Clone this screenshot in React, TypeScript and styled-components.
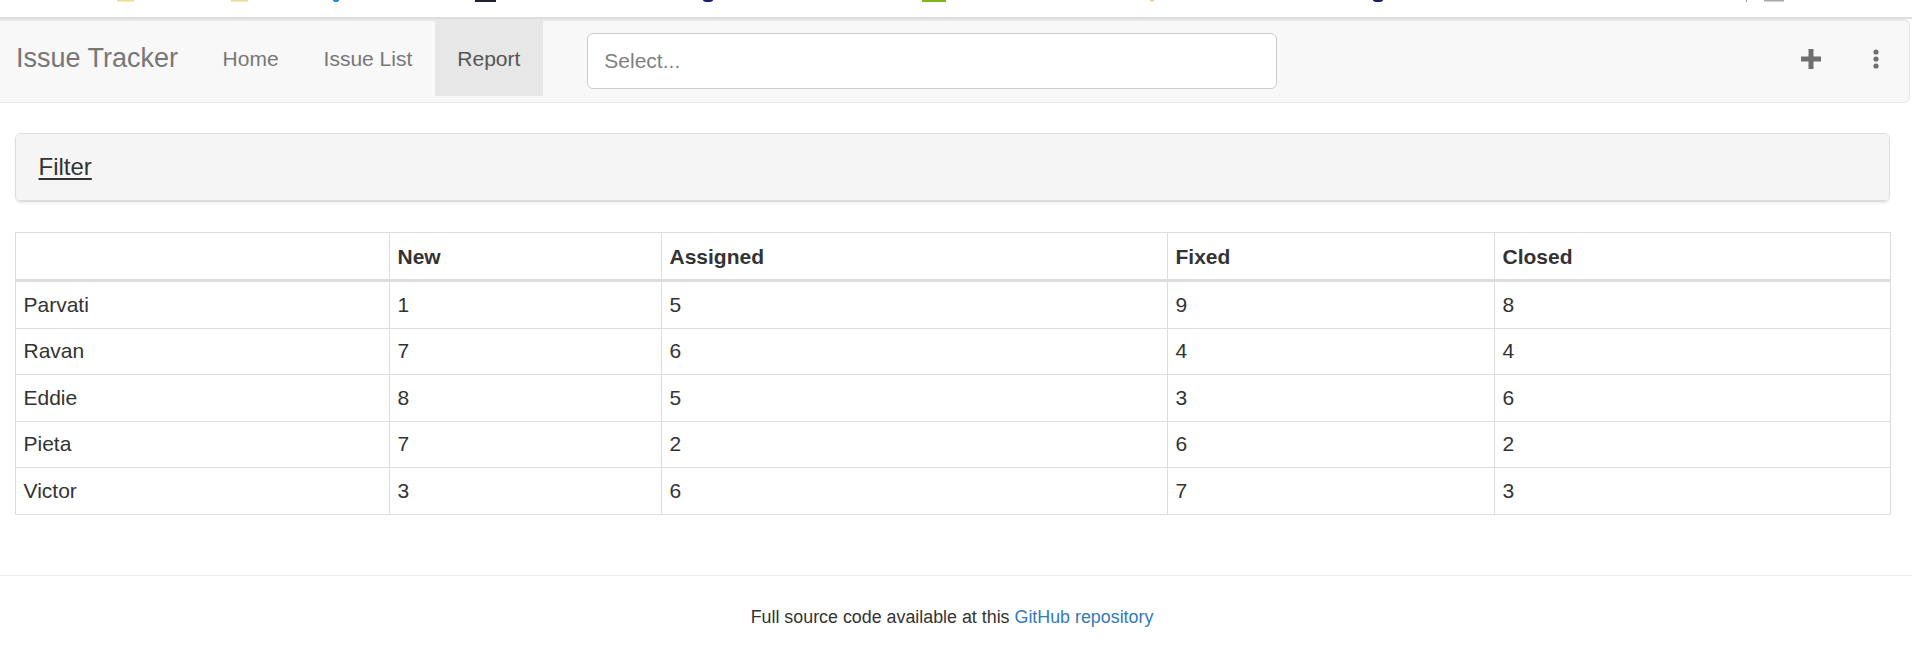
import React from "react";
import styled, { createGlobalStyle } from "styled-components";

const Global = createGlobalStyle`
  html, body { margin: 0; padding: 0; background: #fff; }
  body {
    font-family: "Liberation Sans", Arial, Helvetica, sans-serif;
    font-size: 21px;
    line-height: 30px;
    color: #333;
    width: 1912px;
    overflow: hidden;
  }
  * { box-sizing: border-box; }
`;

const Page = styled.div`
  display: flex;
  flex-direction: column;
  width: 1912px;
`;

const ChromeStrip = styled.div`
  height: 17px;
  background: #fff;
  border-bottom: 2px solid #dcdce1;
  box-sizing: content-box;
  display: flex;
  svg { display: block; }
`;

const Navbar = styled.nav`
  display: flex;
  align-items: flex-start;
  height: 84px;
  margin-right: 2px;
  background: #f8f8f8;
  border: 1px solid #e7e7e7;
  border-top-width: 2px;
  border-left: none;
  border-radius: 0 6px 6px 0;
`;

const Brand = styled.a`
  display: block;
  padding: 0 22px 0 16px;
  height: 75px;
  line-height: 75px;
  font-size: 27px;
  color: #777;
  text-decoration: none;
  white-space: nowrap;
`;

const NavItem = styled.a<{ $active?: boolean }>`
  display: block;
  padding: 0 22.5px;
  height: 75px;
  line-height: 75px;
  font-size: 21px;
  color: ${(p) => (p.$active ? "#555" : "#777")};
  background: ${(p) => (p.$active ? "#e7e7e7" : "transparent")};
  text-decoration: none;
  white-space: nowrap;
`;

const SelectBox = styled.div`
  margin: 12px 0 0 44.5px;
  width: 690px;
  height: 56px;
  border: 1px solid #ccc;
  border-radius: 6px;
  background: #fff;
  display: flex;
  align-items: center;
  padding-left: 16px;
  color: #808080;
  font-size: 21px;
`;

const RightNav = styled.div`
  margin-left: auto;
  display: flex;
  align-items: flex-start;
`;

const IconLink = styled.a<{ $w: number }>`
  width: ${(p) => p.$w}px;
  height: 75px;
  display: flex;
  align-items: center;
  justify-content: center;
  color: #777;
  svg { display: block; }
`;

const Content = styled.main`
  padding: 30px 22px 0 15px;
  display: flex;
  flex-direction: column;
`;

const Panel = styled.section`
  border: 1px solid #ddd;
  border-radius: 6px;
  background: #fff;
  box-shadow: 0 1.5px 1.5px rgba(0, 0, 0, 0.05);
  margin-bottom: 30px;
  overflow: hidden;
`;

const PanelHeading = styled.div`
  background: #f5f5f5;
  padding: 15px 22.5px;
  border-bottom: 1px solid #ddd;
  height: 67px;
`;

const PanelTitle = styled.a`
  font-size: 24px;
  line-height: 36px;
  color: #333;
  text-decoration: underline;
  text-underline-offset: 3px;
  text-decoration-thickness: 1.5px;
`;

const Table = styled.table`
  width: 1875px;
  border-collapse: collapse;
  border: 1px solid #ddd;
  table-layout: fixed;
  margin-bottom: 30px;
`;

const Th = styled.th`
  text-align: left;
  font-weight: bold;
  vertical-align: bottom;
  padding: 8.5px 6.5px 7.5px 7.5px;
  line-height: 30px;
  border: 1px solid #ddd;
  border-bottom: 3px solid #ddd;
  color: #333;
`;

const Td = styled.td`
  padding: 7.5px 6.5px 7.5px 7.5px;
  line-height: 30.6px;
  border: 1px solid #ddd;
  color: #333;
`;

const Footer = styled.footer`
  display: flex;
  flex-direction: column;
`;

const Rule = styled.hr`
  margin: 30px 0 0;
  border: 0;
  border-top: 1.5px solid #eee;
  height: 0;
`;

const FooterText = styled.p`
  margin: 29px 0 0;
  padding-right: 8px;
  text-align: center;
  font-size: 17.85px;
  line-height: 25px;
  color: #333;
  a { color: #337ab7; text-decoration: none; }
`;

const cols = [374, 272, 506, 327, 396];
const heads = ["", "New", "Assigned", "Fixed", "Closed"];
const rows: [string, number, number, number, number][] = [
  ["Parvati", 1, 5, 9, 8],
  ["Ravan", 7, 6, 4, 4],
  ["Eddie", 8, 5, 3, 6],
  ["Pieta", 7, 2, 6, 2],
  ["Victor", 3, 6, 7, 3],
];

function StripArt() {
  return (
    <svg width="1912" height="17" viewBox="0 0 1912 17">
      <rect x="117" y="0" width="17" height="1.5" fill="#f4da8c" />
      <rect x="231" y="0" width="17" height="1.5" fill="#f4da8c" />
      <ellipse cx="336" cy="0" rx="3" ry="2" fill="#1b8ad6" />
      <rect x="475" y="0" width="21" height="2" fill="#1e2233" />
      <ellipse cx="708" cy="0" rx="5" ry="2" fill="#1c1c78" />
      <rect x="922" y="0" width="24" height="2" fill="#7cb71c" />
      <ellipse cx="1152" cy="0" rx="2" ry="1.5" fill="#f7c07a" />
      <ellipse cx="1378" cy="0" rx="5" ry="2" fill="#1c1c78" />
      <rect x="1746" y="0" width="1" height="2" fill="#999" />
      <rect x="1764" y="0" width="20" height="1.5" fill="#a8a8a8" />
    </svg>
  );
}

function PlusIcon() {
  return (
    <svg width="20" height="20" viewBox="0 0 20 20">
      <rect x="0" y="7.5" width="20" height="5" fill="#6f6f6f" />
      <rect x="7.5" y="0" width="5" height="20" fill="#6f6f6f" />
    </svg>
  );
}

function KebabIcon() {
  return (
    <svg width="6" height="20" viewBox="0 0 6 20">
      <circle cx="3" cy="3" r="2.6" fill="#6f6f6f" />
      <circle cx="3" cy="10" r="2.6" fill="#6f6f6f" />
      <circle cx="3" cy="17" r="2.6" fill="#6f6f6f" />
    </svg>
  );
}

export default function App() {
  return (
    <Page>
      <Global />
      <ChromeStrip>
        <StripArt />
      </ChromeStrip>
      <Navbar>
        <Brand>Issue Tracker</Brand>
        <NavItem>Home</NavItem>
        <NavItem>Issue List</NavItem>
        <NavItem $active>Report</NavItem>
        <SelectBox>Select...</SelectBox>
        <RightNav>
          <IconLink $w={65}>
            <PlusIcon />
          </IconLink>
          <IconLink $w={66}>
            <KebabIcon />
          </IconLink>
        </RightNav>
      </Navbar>
      <Content>
        <Panel>
          <PanelHeading>
            <PanelTitle>Filter</PanelTitle>
          </PanelHeading>
        </Panel>
        <Table>
          <colgroup>
            {cols.map((w, i) => (
              <col key={i} style={{ width: w }} />
            ))}
          </colgroup>
          <thead>
            <tr>
              {heads.map((h, i) => (
                <Th key={i}>{h}</Th>
              ))}
            </tr>
          </thead>
          <tbody>
            {rows.map((r) => (
              <tr key={r[0]}>
                {r.map((c, i) => (
                  <Td key={i}>{c}</Td>
                ))}
              </tr>
            ))}
          </tbody>
        </Table>
      </Content>
      <Footer>
        <Rule />
        <FooterText>
          Full source code available at this <a>GitHub repository</a>
        </FooterText>
      </Footer>
    </Page>
  );
}
